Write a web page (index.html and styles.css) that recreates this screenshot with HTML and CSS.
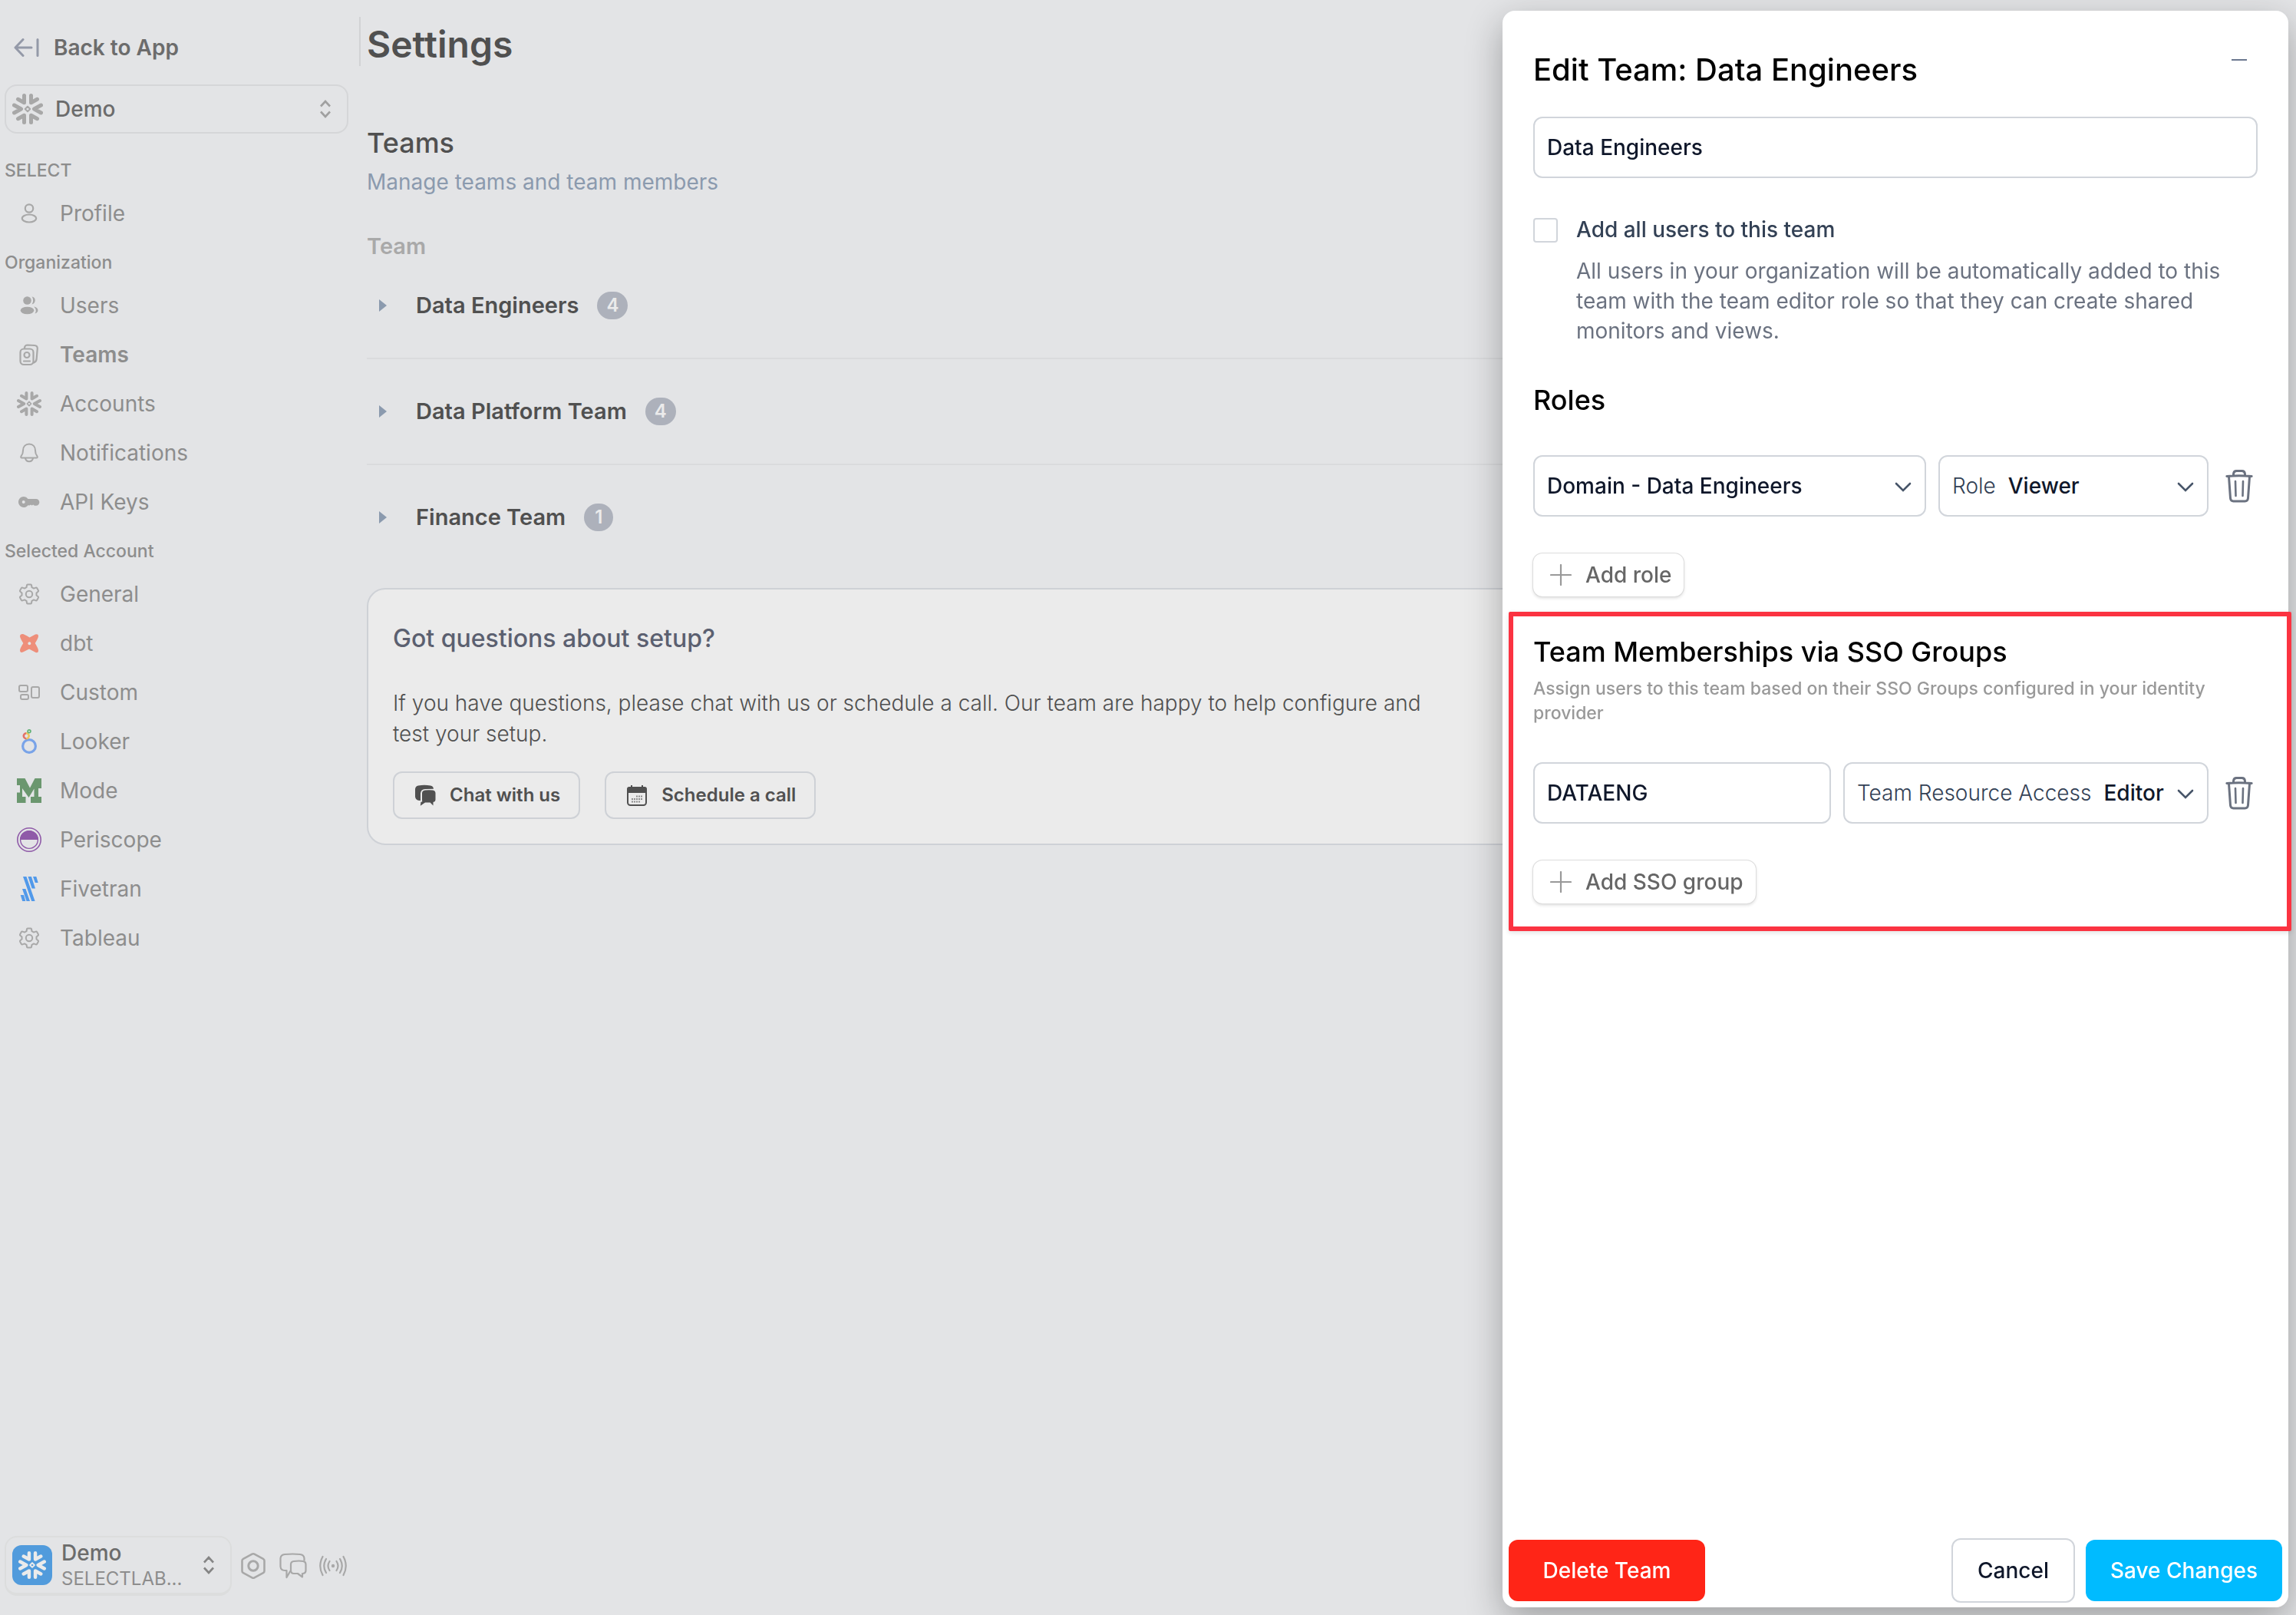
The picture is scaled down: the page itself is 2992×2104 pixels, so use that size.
FILE: index.html
```html
<!DOCTYPE html>
<html lang="en">
<head>
  <meta charset="UTF-8">
  <meta name="viewport" content="width=device-width, initial-scale=1.0">
  <title>Settings – Teams</title>
  <link rel="stylesheet" href="styles.css">
</head>
<body>
  <!-- shared icons -->
  <svg class="sprite" aria-hidden="true">
    <symbol id="snowflake" viewBox="0 0 32 32">
      <g fill="none" stroke="currentColor" stroke-width="4" stroke-linecap="round" stroke-linejoin="round">
        <path d="M12.4 2v7.4L6 5.8M19.6 2v7.4L26 5.8M12.4 30v-7.4L6 26.2M19.6 30v-7.4l6.4 3.6M2 12l7.2 4L2 20M30 12l-7.2 4 7.2 4"/>
      </g>
      <path d="M16 13.4l2.6 2.6-2.6 2.6-2.6-2.6z" fill="none" stroke="currentColor" stroke-width="1.6" stroke-linejoin="round"/>
    </symbol>
    <symbol id="gear" viewBox="0 0 32 32">
      <g fill="none" stroke="currentColor" stroke-width="2" stroke-linejoin="round">
        <path d="M13 4.500Q13 3.500 14 3.500H18Q19 3.500 19 4.500L19.500 7.200L22 8.600L24.600 7.600Q25.600 7.300 26.100 8.100L27.900 11.300Q28.300 12.200 27.600 12.800L25.500 14.600V17.400L27.600 19.200Q28.300 19.800 27.900 20.700L26.100 23.900Q25.600 24.700 24.600 24.400L22 23.400L19.500 24.800L19 27.500Q19 28.500 18 28.500H14Q13 28.500 13 27.500L12.500 24.800L10 23.400L7.400 24.400Q6.400 24.700 5.900 23.900L4.100 20.700Q3.700 19.800 4.400 19.200L6.500 17.400V14.600L4.400 12.800Q3.700 12.200 4.100 11.300L5.900 8.100Q6.400 7.300 7.400 7.600L10 8.600L12.500 7.200Z"/>
        <circle cx="16" cy="16" r="4.200"/>
      </g>
    </symbol>
    <symbol id="updown" viewBox="0 0 16 24">
      <path d="M2 8.500L8 2l6 6.500M2 15.500L8 22l6-6.500" fill="none" stroke="currentColor" stroke-width="2.600"/>
    </symbol>
    <symbol id="down" viewBox="0 0 24 24">
      <path d="M3 9l9 9 9-9" fill="none" stroke="currentColor" stroke-width="2.600" stroke-linecap="round"/>
    </symbol>
    <symbol id="plus" viewBox="0 0 28 28">
      <path d="M14 1v26M1 14h26" fill="none" stroke="currentColor" stroke-width="2.200" stroke-linecap="round"/>
    </symbol>
    <symbol id="trash" viewBox="0 0 36 44">
      <g fill="none" stroke="currentColor" stroke-width="3" stroke-linecap="round" stroke-linejoin="round">
        <path d="M1.800 9.400q16-1.400 32.400 0M10.500 8V6.500q.3-4 4-4h7q3.700 0 4 4V8M4.500 10l2 28q.3 4 4 4h15q3.700 0 4-4l2-28"/>
        <path d="M13 16l.5 19M23 16l-.5 19" stroke-width="2.600"/>
      </g>
    </symbol>
  </svg>

  <aside class="sidebar">
    <a class="back" href="#">
      <svg class="icon-back" viewBox="0 0 34 24"><path d="M12 1.500L2 12l10 10.500M2 12h21M31 1.500v21" fill="none" stroke="currentColor" stroke-width="3" stroke-linecap="round" stroke-linejoin="round"/></svg>
      Back to App
    </a>

    <button class="switcher" type="button">
      <svg class="icon-lg"><use href="#snowflake"/></svg>
      <span>Demo</span>
      <svg class="updown"><use href="#updown"/></svg>
    </button>

    <nav class="nav">
      <h4>SELECT</h4>
      <a href="#">
        <svg viewBox="0 0 32 32"><g fill="none" stroke="currentColor" stroke-width="2.200"><circle cx="16" cy="9.500" r="5.200"/><ellipse cx="16" cy="22.500" rx="9.200" ry="5"/></g></svg>
        Profile
      </a>

      <h4>Organization</h4>
      <a href="#">
        <svg viewBox="0 0 32 32" fill="currentColor"><circle cx="13.500" cy="9.500" r="5.300"/><ellipse cx="13.500" cy="22.500" rx="8.800" ry="4.800"/><path d="M19.500 4.600c5.500 0 5.900 9 0 9.800 2.200-2.500 2.200-7 0-9.800zM22 17.500c6.500.6 7.500 7.500 1.500 9 2.200-3 1.500-6.500-1.500-9z"/></svg>
        Users
      </a>
      <a href="#" class="active">
        <svg viewBox="0 0 32 32"><g fill="none" stroke="currentColor" stroke-width="2.200" stroke-linecap="round" stroke-linejoin="round"><rect x="4.500" y="8.500" width="17" height="20.500" rx="4.500"/><path d="M10 8V7q.3-3.500 4-3.500l9 .5q4 .5 3.800 4l-1.200 14q-.4 3-3.500 4.500"/><circle cx="13" cy="16.500" r="3.500"/><path d="M9 24.500h8"/></g></svg>
        Teams
      </a>
      <a href="#">
        <svg><use href="#snowflake"/></svg>
        Accounts
      </a>
      <a href="#">
        <svg viewBox="0 0 32 32"><path d="M16 4.500c-5 0-8 3.500-8 8.500 0 4-1 5.500-2.300 7-1 1.500-.5 2.500 1 2.500h18.600c1.500 0 2-1 1-2.500C25 18.500 24 17 24 13c0-5-3-8.500-8-8.500zM11 23c1 5.500 9 5.500 10 0" fill="none" stroke="currentColor" stroke-width="2"/></svg>
        Notifications
      </a>
      <a href="#">
        <svg viewBox="0 0 32 32"><path d="M9 9a7 7 0 1 0 5.500 11.300l2 .2 1.500-1 1.500 1 1.700-1 1.800 1.200H25a4.300 4.300 0 0 0 0-8.700H14.500A7 7 0 0 0 9 9zm-.3 5a2 2 0 1 1 0 4 2 2 0 0 1 0-4z" fill="currentColor" fill-rule="evenodd"/></svg>
        API Keys
      </a>

      <h4>Selected Account</h4>
      <a href="#">
        <svg><use href="#gear"/></svg>
        General
      </a>
      <a href="#">
        <svg viewBox="0 0 32 32"><path d="M7.500 4q2 0 9 4.500L24 4.600Q28 3 28 7q0 2-4.300 9 4.300 7 4.300 9.500 0 3.500-3.500 2.500L16 23.500 8 27.600Q4 29 4 25q0-2 4.300-9Q4 9 4 7q0-3 3.500-3zm8.800 10.300a2 2 0 1 0 .1 0z" fill="#ee8e7a" fill-rule="evenodd"/></svg>
        dbt
      </a>
      <a href="#">
        <svg viewBox="0 0 32 32"><g fill="none" stroke="currentColor" stroke-width="2"><rect x="3" y="7" width="11" height="8" rx="2"/><rect x="5" y="19" width="10" height="6" rx="2"/><rect x="19" y="9" width="10" height="14" rx="2"/></g></svg>
        Custom
      </a>
      <a href="#">
        <svg viewBox="0 0 32 32"><g fill="none"><circle cx="16" cy="22" r="8.400" stroke="#79a3e8" stroke-width="3.200"/><path d="M12.500 12.200A3.300 3.300 0 1 1 12 5.300" stroke="#e27167" stroke-width="2.600"/><path d="M12 5.300a3.300 3.300 0 0 1 .5 6.900" stroke="#ecc45e" stroke-width="2.600"/><circle cx="16" cy="2.800" r="1.900" stroke="#62b277" stroke-width="1.800"/></g></svg>
        Looker
      </a>
      <a href="#">
        <svg viewBox="0 0 32 32"><path d="M0 0h10.500L17 12.500 23.500 0H32v13h-4v11h4v8H18v-8h4.500V13.500L15.500 25 7 13v11h4.500v8H0V18.500h4V9H0z" fill="#6b976f"/></svg>
        Mode
      </a>
      <a href="#">
        <svg viewBox="0 0 32 32"><g fill="none" stroke="#8f5aa8"><circle cx="16" cy="16" r="15.200" stroke-width="1.600"/><circle cx="16" cy="16" r="11.400" stroke-width="1.400"/></g><path d="M4 16a12 12 0 0 1 24 0z" fill="#8f5aa8"/></svg>
        Periscope
      </a>
      <a href="#">
        <svg viewBox="0 0 32 32"><path d="M8 0h4.400l11.200 32h-4.400zM14.500 0h4.400L24 15.500h-4.400zM21 0h4.300l2.400 8h-3.900zM7 16h4.400L17 32h-4.400zM4.700 24H9l2.300 8H7.200z" fill="#5199ea"/></svg>
        Fivetran
      </a>
      <a href="#">
        <svg><use href="#gear"/></svg>
        Tableau
      </a>
    </nav>

    <div class="account-bar">
      <button class="account" type="button">
        <span class="logo"><svg><use href="#snowflake"/></svg></span>
        <span class="account-name">
          <strong>Demo</strong>
          <small>SELECTLAB...</small>
        </span>
        <svg class="updown"><use href="#updown"/></svg>
      </button>
      <button class="tool" type="button" aria-label="Settings">
        <svg viewBox="0 0 36 36"><g fill="none" stroke="currentColor" stroke-width="2.600" stroke-linejoin="round"><path d="M16.500 2.600q1.500-.8 3 0L31 8.800q1.500.8 1.500 2.400v13.600q0 1.600-1.500 2.400l-11.500 6.200q-1.500.8-3 0L5 27.200q-1.500-.8-1.500-2.400V11.200q0-1.600 1.500-2.400z"/><circle cx="18" cy="18" r="6.200" stroke-width="3"/></g></svg>
      </button>
      <button class="tool" type="button" aria-label="Chat">
        <svg viewBox="0 0 36 36"><g fill="none" stroke="currentColor" stroke-width="2.200" stroke-linejoin="round"><path d="M14.500 24.500L9.500 33V24H7q-5 0-5.500-5V8Q2 3.500 7 3q11-1 20 0 5 .5 5.500 5v3.500"/><path d="M19 12q7-1 12 0 3.500.5 3.500 4v8q0 3.500-3.500 4h-1v4.500L24 28h-5q-4 0-4-4v-8q0-3.500 4-4z"/></g></svg>
      </button>
      <button class="tool" type="button" aria-label="Status">
        <svg viewBox="0 0 36 36"><circle cx="18" cy="18" r="2.200" fill="currentColor"/><g fill="none" stroke="currentColor" stroke-width="2.200" stroke-linecap="round"><path d="M13.500 12q-4 6 0 12M22.500 12q4 6 0 12M9 9q-5.500 9 0 18M27 9q5.500 9 0 18M4.500 6q-6.500 12 0 24M31.500 6q6.500 12 0 24"/></g></svg>
      </button>
    </div>
  </aside>

  <main class="main">
    <h1>Settings</h1>
    <h2>Teams</h2>
    <p class="subtitle">Manage teams and team members</p>

    <h3 class="list-title">Team</h3>
    <ul class="teams">
      <li><button type="button"><span class="caret"></span>Data Engineers <span class="badge">4</span></button></li>
      <li><button type="button"><span class="caret"></span>Data Platform Team <span class="badge">4</span></button></li>
      <li><button type="button"><span class="caret"></span>Finance Team <span class="badge">1</span></button></li>
    </ul>

    <section class="help">
      <h3>Got questions about setup?</h3>
      <p>If you have questions, please chat with us or schedule a call. Our team are happy to help configure and test your setup.</p>
      <div class="help-actions">
        <button type="button">
          <svg viewBox="0 0 28 28" fill="currentColor"><path d="M5 1.500q8-1.400 16 0 3.500.6 4 4.200l-11 .3q-5.500.4-6 5.500v9.500l-3-.3Q1.400 19.500 1 16V6Q1.400 2.300 5 1.500z"/><path d="M14 7.500q5-.6 10 0 3.500.4 3.500 4v8q0 3-3 3.500v4.500L20.500 23.500h-6.500l-6.200 4.300.7-5.300q1 .5 1.800-.2-.3-1.200-.3-2.800v-8q0-3.500 4-4z"/></svg>
          Chat with us
        </button>
        <button type="button">
          <svg viewBox="0 0 28 28"><rect x="2" y="4" width="24" height="23" rx="3.500" fill="none" stroke="currentColor" stroke-width="2"/><path d="M1 11V6q0-3 3-3h2V1h2v2h12V1h2v2h2q3 0 3 3v5z" fill="currentColor"/><path d="M13 15.500h9M7 19h15M7 22.500h11" stroke="currentColor" stroke-width="2" stroke-dasharray="2 1" opacity=".6"/></svg>
          Schedule a call
        </button>
      </div>
    </section>
  </main>

  <form class="panel">
    <header class="panel-head">
      <h2>Edit Team: Data Engineers</h2>
      <button class="minimize" type="button" aria-label="Minimize"></button>
    </header>

    <input class="field" type="text" value="Data Engineers" aria-label="Team name">

    <div class="check">
      <input type="checkbox" id="all-users">
      <div>
        <label for="all-users">Add all users to this team</label>
        <p>All users in your organization will be automatically added to this team with the team editor role so that they can create shared monitors and views.</p>
      </div>
    </div>

    <section class="roles">
      <h3>Roles</h3>
      <div class="row">
        <div class="field select domain">
          <select aria-label="Domain"><option>Domain - Data Engineers</option></select>
          <svg><use href="#down"/></svg>
        </div>
        <div class="field select role">
          <label for="role">Role</label>
          <select id="role"><option>Viewer</option></select>
          <svg><use href="#down"/></svg>
        </div>
        <button class="trash" type="button" aria-label="Remove role"><svg><use href="#trash"/></svg></button>
      </div>
      <button class="add" type="button"><svg><use href="#plus"/></svg>Add role</button>
    </section>

    <section class="sso">
      <h3>Team Memberships via SSO Groups</h3>
      <p>Assign users to this team based on their SSO Groups configured in your identity provider</p>
      <div class="row">
        <input class="field group" type="text" value="DATAENG" aria-label="SSO group">
        <div class="field select access">
          <label for="access">Team Resource Access</label>
          <select id="access"><option>Editor</option></select>
          <svg><use href="#down"/></svg>
        </div>
        <button class="trash" type="button" aria-label="Remove SSO group"><svg><use href="#trash"/></svg></button>
      </div>
      <button class="add" type="button"><svg><use href="#plus"/></svg>Add SSO group</button>
    </section>

    <footer class="panel-foot">
      <button class="btn danger" type="button">Delete Team</button>
      <button class="btn cancel" type="button">Cancel</button>
      <button class="btn primary" type="submit">Save Changes</button>
    </footer>
  </form>
</body>
</html>
```
FILE: styles.css
```css
* {
  box-sizing: border-box;
}

body {
  margin: 0;
  min-height: 100vh;
  display: flex;
  background: #e3e4e6;
  color: #505050;
  font-family: Inter, "Liberation Sans", sans-serif;
  font-size: 28px;
  line-height: 40px;
}

h1, h2, h3, h4, p, ul {
  margin: 0;
  padding: 0;
  font-weight: 500;
}

button, input, select {
  font: inherit;
  color: inherit;
}

button {
  padding: 0;
  border: none;
  background: none;
  cursor: pointer;
}

svg {
  display: block;
  flex: none;
}

a {
  color: inherit;
  text-decoration: none;
}

.sprite {
  position: absolute;
  width: 0;
  height: 0;
}

/* Sidebar */
.sidebar {
  flex: none;
  width: 468px;
  padding: 42px 14px 25px 6px;
  display: flex;
  flex-direction: column;
  color: #8d8d8d;
}

.back {
  display: flex;
  align-items: center;
  gap: 18px;
  padding-left: 12px;
  margin-bottom: 28px;
  font-weight: 600;
  color: #6c6c6c;
}
.icon-back { width: 34px; height: 24px; color: #9499a8; }

.switcher {
  display: flex;
  align-items: center;
  gap: 16px;
  height: 64px;
  padding: 0 20px 0 8px;
  border: 2px solid #d5d6d8;
  border-radius: 16px;
  font-weight: 500;
  color: #6c6c6c;
  margin-bottom: 16px;
}
.icon-lg { width: 40px; height: 40px; color: #a8a8a8; }
.updown { width: 16px; height: 24px; margin-left: auto; color: #a0a0a0; }

.nav h4 {
  height: 56px;
  padding-top: 8px;
  font-size: 23px;
  line-height: 48px;
}

.nav a {
  display: flex;
  align-items: center;
  gap: 24px;
  height: 64px;
  padding-left: 16px;
}
.nav a.active { font-weight: 600; }
.nav svg { width: 32px; height: 32px; color: #a8a8a8; }

.account-bar {
  margin-top: auto;
  display: flex;
  align-items: center;
  gap: 16px;
}

.account {
  display: flex;
  align-items: center;
  gap: 12px;
  width: 296px;
  height: 78px;
  padding: 0 20px 0 8px;
  margin-right: -6px;
  border: 2px solid #dcdddd;
  border-bottom-width: 4px;
  border-radius: 16px;
  text-align: left;
}
.account-name { padding-top: 2px; }
.account strong, .account small {
  display: block;
  font-size: 28px;
  line-height: 34px;
  font-weight: 500;
  color: #6c6c6c;
}
.account small { font-size: 24px; font-weight: 400; color: #8d8d8d; }
.account .updown { color: #858585; }

.logo {
  display: grid;
  place-items: center;
  width: 52px;
  height: 52px;
  border-radius: 12px;
  background: #519bdc;
  color: #ebebeb;
}
.logo svg { width: 36px; height: 36px; }

.tool svg { width: 36px; height: 36px; color: #a8a8a8; }

/* Main */
.main {
  flex: 1;
  padding: 22px 24px 0 10px;
}

.main h1 {
  position: relative;
  height: 64px;
  font-size: 48px;
  line-height: 72px;
  font-weight: 600;
  margin-bottom: 76px;
}
/* divider between sidebar and page title */
.main h1::before {
  content: "";
  position: absolute;
  left: -10px;
  top: 0;
  width: 2px;
  height: 64px;
  background: #d2d3d5;
}

.main h2 {
  font-size: 36px;
  line-height: 48px;
}

.subtitle {
  font-weight: 400;
  line-height: 54px;
  color: #8b9aae;
  margin-bottom: 36px;
}

.list-title {
  font-size: 29px;
  line-height: 42px;
  font-weight: 600;
  color: #a9a9a9;
  margin-bottom: -12px;
}

.teams { list-style: none; }
.teams li { border-bottom: 2px solid #dadbdd; }
.teams li:last-child { border: none; }
.teams button {
  display: flex;
  align-items: center;
  width: 100%;
  height: 136px;
  padding-left: 16px;
  font-size: 29px;
  font-weight: 600;
}

.caret {
  border: 8px solid transparent;
  border-left: 10px solid #8b9aae;
  border-right: none;
  margin-right: 38px;
}

.badge {
  min-width: 38px;
  height: 36px;
  padding: 0 12px;
  margin-left: 24px;
  border-radius: 18px;
  background: #adb1bb;
  color: #ebebeb;
  font-size: 24px;
  line-height: 36px;
}

.help {
  margin-top: 24px;
  padding: 44px 32px 32px;
  border: 2px solid #ced1d6;
  border-radius: 24px;
  background: #ebebeb;
}
.help h3 {
  font-size: 32px;
  line-height: 40px;
  color: #5b6070;
  margin-bottom: 44px;
}
.help p {
  max-width: 1380px;
  font-weight: 300;
  line-height: 40px;
}
.help-actions {
  display: flex;
  gap: 32px;
  margin-top: 29px;
}
.help-actions button {
  display: flex;
  align-items: center;
  gap: 18px;
  height: 62px;
  padding: 0 24px 0 26px;
  border: 2px solid #ced1d6;
  border-radius: 12px;
  font-size: 24px;
  font-weight: 600;
}
.help-actions svg { width: 28px; height: 28px; }

/* Edit panel */
.panel {
  position: fixed;
  top: 14px;
  right: 10px;
  bottom: 10px;
  width: 1024px;
  padding: 50px 40px 6px;
  display: flex;
  flex-direction: column;
  border-radius: 16px;
  background: #fff;
  color: #0f172a;
  box-shadow: 0 16px 48px rgba(0, 0, 0, 0.3);
}

.panel-head {
  display: flex;
  justify-content: space-between;
  margin-bottom: 34px;
}
.panel h2 {
  font-size: 40px;
  line-height: 54px;
  color: #000;
}
.minimize {
  width: 48px;
  height: 28px;
}
.minimize::before {
  content: "";
  display: block;
  width: 20px;
  height: 2px;
  margin: 0 auto;
  background: #6b7890;
}

.field {
  height: 80px;
  padding: 0 16px;
  border: 2px solid #d1d5db;
  border-radius: 12px;
  background: #fff;
  font-weight: 500;
}

.check {
  display: flex;
  gap: 24px;
  margin-top: 48px;
}
.check input {
  appearance: none;
  flex: none;
  width: 32px;
  height: 32px;
  margin: 4px 0 0;
  border: 2px solid #d1d5db;
  border-radius: 4px;
}
.check label {
  display: block;
  font-weight: 500;
  line-height: 38px;
  color: #334155;
}
.check p {
  margin-top: 16px;
  font-weight: 400;
  line-height: 39px;
  color: #6b7280;
}

.panel h3 {
  font-size: 36px;
  line-height: 48px;
  color: #000;
}

.roles { margin-top: 46px; }

.row {
  display: flex;
  align-items: center;
  gap: 16px;
}

.roles .row { margin-top: 48px; }

.select {
  display: flex;
  align-items: center;
  gap: 16px;
}
.select label { font-weight: 300; color: #334155; }
.select select {
  appearance: none;
  flex: 1;
  min-width: 0;
  padding: 0;
  margin-right: -12px;
  border: none;
  background: none;
  outline: none;
}
.select svg { width: 24px; height: 24px; color: #475569; }

.domain { flex: 1; }
.role { width: 352px; }
.group { flex: 1; min-width: 0; }
.access { width: 476px; }

.trash {
  width: 48px;
  padding-left: 6px;
}
.trash svg { width: 36px; height: 44px; color: #6b7280; }

.add {
  display: flex;
  align-items: center;
  align-self: flex-start;
  gap: 18px;
  height: 56px;
  padding: 0 16px 0 22px;
  margin-top: 48px;
  border-radius: 12px;
  box-shadow: 0 0 0 1px #ddd, 0 2px 4px rgba(0, 0, 0, 0.16);
  font-weight: 500;
  color: #666;
}
.add svg { width: 28px; height: 28px; color: #999; }

.sso {
  position: relative;
  margin-top: 48px;
}
/* highlight frame, runs past the panel edge */
.sso::after {
  content: "";
  position: absolute;
  inset: -28px -44px -36px -32px;
  border: 6px solid #fb3341;
  border-radius: 2px;
  box-shadow: 0 2px 6px rgba(0, 0, 0, 0.12);
  pointer-events: none;
}
.sso p {
  margin-top: 8px;
  font-size: 23px;
  line-height: 32px;
  color: #999;
}
.sso .row { margin-top: 48px; }

.panel-foot {
  display: flex;
  align-items: center;
  gap: 14px;
  margin: auto -32px 0;
}
.btn {
  height: 80px;
  padding: 0 30px;
  border-radius: 12px;
  font-weight: 500;
  white-space: nowrap;
}
.danger { width: 256px; margin-right: auto; background: #ff2517; color: #fff; }
.cancel { border: 2px solid #d1d5db; height: 84px; padding: 0 32px; }
.primary { width: 256px; background: #00bbff; color: #fff; }
```
